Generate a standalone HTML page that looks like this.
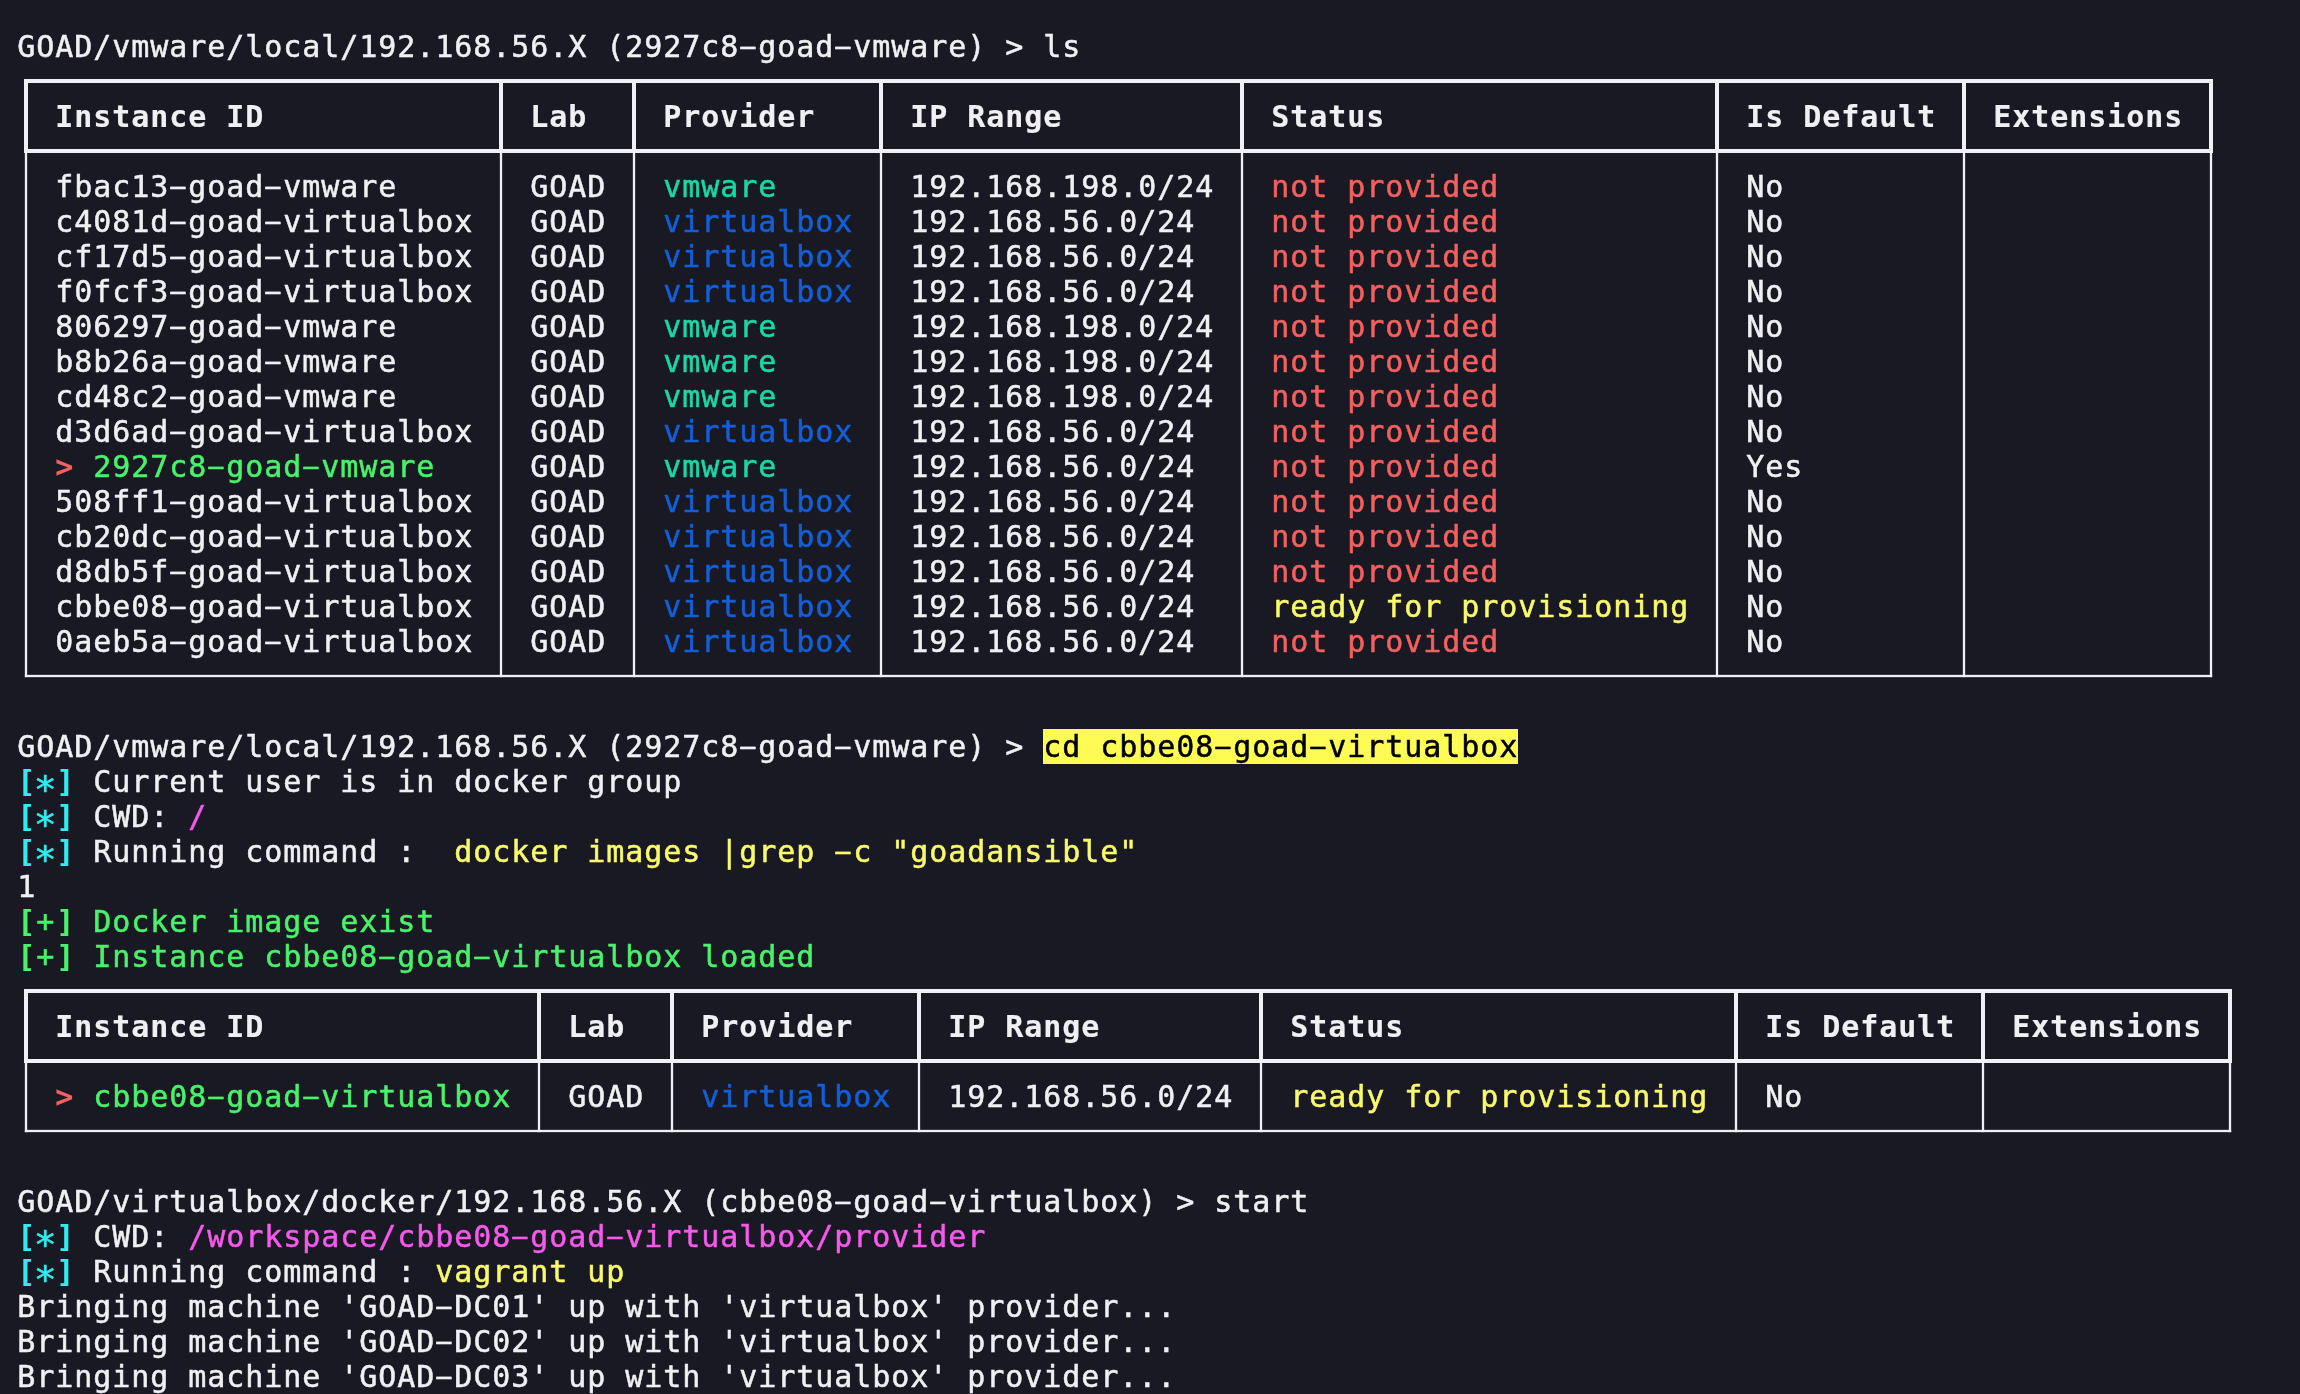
<!DOCTYPE html><html><head><meta charset="utf-8"><title>GOAD terminal</title><style>
html,body{margin:0;padding:0;background:#191923;}
#t{position:relative;width:2300px;height:1394px;overflow:hidden;will-change:transform;color:#f0f0f2;font-family:"DejaVu Sans Mono","Liberation Mono",monospace;font-size:30.0px;line-height:35.0px;letter-spacing:0.9385px;}
.l{position:absolute;left:0;height:35.0px;white-space:pre;}
.s{position:absolute;top:0px;height:35.0px;white-space:pre;}
.s{-webkit-text-stroke:0.5px currentColor}
.b{font-weight:bold;-webkit-text-stroke:0.15px currentColor}
#tx{position:absolute;left:0;top:0;width:2300px;height:1394px}
.rb{margin-left:1px}
.ast{font-size:38px;margin-top:9px;margin-left:-2.4px}
i{font-style:normal;display:inline-block;transform:translateY(-1.9px) scale(1.9,0.9);transform-origin:9.03px 22.5px}
.c-w{color:#f0f0f2}
.c-teal{color:#1cd7a5}
.c-blue{color:#145fd7}
.c-red{color:#f4605f}
.c-yel{color:#f9f96c}
.c-cyan{color:#32ebf0}
.c-grn{color:#48f26a}
.c-mag{color:#f55aeb}
.c-blk{color:#000000}
.h,.v,.H,.V{position:absolute;background:#f2f2f6}
</style></head><body><div id="t">
<div style="position:absolute;left:1043.00px;top:729.00px;width:475.00px;height:35.00px;background:#fffb55"></div>
<div id="tx">
<div class="l" style="top:29.00px"><span class="s c-w" style="left:17.20px;">GOAD/vmware/local/192.168.56.X (2927c8<i>-</i>goad<i>-</i>vmware) &gt; ls</span></div>
<div class="l" style="top:99.00px"><span class="s c-w b" style="left:55.20px;">Instance ID</span><span class="s c-w b" style="left:530.20px;">Lab</span><span class="s c-w b" style="left:663.20px;">Provider</span><span class="s c-w b" style="left:910.20px;">IP Range</span><span class="s c-w b" style="left:1271.20px;">Status</span><span class="s c-w b" style="left:1746.20px;">Is Default</span><span class="s c-w b" style="left:1993.20px;">Extensions</span></div>
<div class="l" style="top:169.00px"><span class="s c-w" style="left:55.20px;">fbac13<i>-</i>goad<i>-</i>vmware</span><span class="s c-w" style="left:530.20px;">GOAD</span><span class="s c-teal" style="left:663.20px;">vmware</span><span class="s c-w" style="left:910.20px;">192.168.198.0/24</span><span class="s c-red" style="left:1271.20px;">not provided</span><span class="s c-w" style="left:1746.20px;">No</span></div>
<div class="l" style="top:204.00px"><span class="s c-w" style="left:55.20px;">c4081d<i>-</i>goad<i>-</i>virtualbox</span><span class="s c-w" style="left:530.20px;">GOAD</span><span class="s c-blue" style="left:663.20px;">virtualbox</span><span class="s c-w" style="left:910.20px;">192.168.56.0/24</span><span class="s c-red" style="left:1271.20px;">not provided</span><span class="s c-w" style="left:1746.20px;">No</span></div>
<div class="l" style="top:239.00px"><span class="s c-w" style="left:55.20px;">cf17d5<i>-</i>goad<i>-</i>virtualbox</span><span class="s c-w" style="left:530.20px;">GOAD</span><span class="s c-blue" style="left:663.20px;">virtualbox</span><span class="s c-w" style="left:910.20px;">192.168.56.0/24</span><span class="s c-red" style="left:1271.20px;">not provided</span><span class="s c-w" style="left:1746.20px;">No</span></div>
<div class="l" style="top:274.00px"><span class="s c-w" style="left:55.20px;">f0fcf3<i>-</i>goad<i>-</i>virtualbox</span><span class="s c-w" style="left:530.20px;">GOAD</span><span class="s c-blue" style="left:663.20px;">virtualbox</span><span class="s c-w" style="left:910.20px;">192.168.56.0/24</span><span class="s c-red" style="left:1271.20px;">not provided</span><span class="s c-w" style="left:1746.20px;">No</span></div>
<div class="l" style="top:309.00px"><span class="s c-w" style="left:55.20px;">806297<i>-</i>goad<i>-</i>vmware</span><span class="s c-w" style="left:530.20px;">GOAD</span><span class="s c-teal" style="left:663.20px;">vmware</span><span class="s c-w" style="left:910.20px;">192.168.198.0/24</span><span class="s c-red" style="left:1271.20px;">not provided</span><span class="s c-w" style="left:1746.20px;">No</span></div>
<div class="l" style="top:344.00px"><span class="s c-w" style="left:55.20px;">b8b26a<i>-</i>goad<i>-</i>vmware</span><span class="s c-w" style="left:530.20px;">GOAD</span><span class="s c-teal" style="left:663.20px;">vmware</span><span class="s c-w" style="left:910.20px;">192.168.198.0/24</span><span class="s c-red" style="left:1271.20px;">not provided</span><span class="s c-w" style="left:1746.20px;">No</span></div>
<div class="l" style="top:379.00px"><span class="s c-w" style="left:55.20px;">cd48c2<i>-</i>goad<i>-</i>vmware</span><span class="s c-w" style="left:530.20px;">GOAD</span><span class="s c-teal" style="left:663.20px;">vmware</span><span class="s c-w" style="left:910.20px;">192.168.198.0/24</span><span class="s c-red" style="left:1271.20px;">not provided</span><span class="s c-w" style="left:1746.20px;">No</span></div>
<div class="l" style="top:414.00px"><span class="s c-w" style="left:55.20px;">d3d6ad<i>-</i>goad<i>-</i>virtualbox</span><span class="s c-w" style="left:530.20px;">GOAD</span><span class="s c-blue" style="left:663.20px;">virtualbox</span><span class="s c-w" style="left:910.20px;">192.168.56.0/24</span><span class="s c-red" style="left:1271.20px;">not provided</span><span class="s c-w" style="left:1746.20px;">No</span></div>
<div class="l" style="top:449.00px"><span class="s c-red b" style="left:55.20px;">&gt; </span><span class="s c-grn" style="left:93.20px;">2927c8<i>-</i>goad<i>-</i>vmware</span><span class="s c-w" style="left:530.20px;">GOAD</span><span class="s c-teal" style="left:663.20px;">vmware</span><span class="s c-w" style="left:910.20px;">192.168.56.0/24</span><span class="s c-red" style="left:1271.20px;">not provided</span><span class="s c-w" style="left:1746.20px;">Yes</span></div>
<div class="l" style="top:484.00px"><span class="s c-w" style="left:55.20px;">508ff1<i>-</i>goad<i>-</i>virtualbox</span><span class="s c-w" style="left:530.20px;">GOAD</span><span class="s c-blue" style="left:663.20px;">virtualbox</span><span class="s c-w" style="left:910.20px;">192.168.56.0/24</span><span class="s c-red" style="left:1271.20px;">not provided</span><span class="s c-w" style="left:1746.20px;">No</span></div>
<div class="l" style="top:519.00px"><span class="s c-w" style="left:55.20px;">cb20dc<i>-</i>goad<i>-</i>virtualbox</span><span class="s c-w" style="left:530.20px;">GOAD</span><span class="s c-blue" style="left:663.20px;">virtualbox</span><span class="s c-w" style="left:910.20px;">192.168.56.0/24</span><span class="s c-red" style="left:1271.20px;">not provided</span><span class="s c-w" style="left:1746.20px;">No</span></div>
<div class="l" style="top:554.00px"><span class="s c-w" style="left:55.20px;">d8db5f<i>-</i>goad<i>-</i>virtualbox</span><span class="s c-w" style="left:530.20px;">GOAD</span><span class="s c-blue" style="left:663.20px;">virtualbox</span><span class="s c-w" style="left:910.20px;">192.168.56.0/24</span><span class="s c-red" style="left:1271.20px;">not provided</span><span class="s c-w" style="left:1746.20px;">No</span></div>
<div class="l" style="top:589.00px"><span class="s c-w" style="left:55.20px;">cbbe08<i>-</i>goad<i>-</i>virtualbox</span><span class="s c-w" style="left:530.20px;">GOAD</span><span class="s c-blue" style="left:663.20px;">virtualbox</span><span class="s c-w" style="left:910.20px;">192.168.56.0/24</span><span class="s c-yel" style="left:1271.20px;">ready for provisioning</span><span class="s c-w" style="left:1746.20px;">No</span></div>
<div class="l" style="top:624.00px"><span class="s c-w" style="left:55.20px;">0aeb5a<i>-</i>goad<i>-</i>virtualbox</span><span class="s c-w" style="left:530.20px;">GOAD</span><span class="s c-blue" style="left:663.20px;">virtualbox</span><span class="s c-w" style="left:910.20px;">192.168.56.0/24</span><span class="s c-red" style="left:1271.20px;">not provided</span><span class="s c-w" style="left:1746.20px;">No</span></div>
<div class="l" style="top:729.00px"><span class="s c-w" style="left:17.20px;">GOAD/vmware/local/192.168.56.X (2927c8<i>-</i>goad<i>-</i>vmware) &gt; </span><span class="s c-blk" style="left:1043.20px;">cd cbbe08<i>-</i>goad<i>-</i>virtualbox</span></div>
<div class="l" style="top:764.00px"><span class="s c-cyan b" style="left:17.20px;">[</span><span class="s c-cyan ast" style="left:36.20px;">*</span><span class="s c-cyan b rb" style="left:55.20px;">]</span><span class="s c-w" style="left:74.20px;"> Current user is in docker group</span></div>
<div class="l" style="top:799.00px"><span class="s c-cyan b" style="left:17.20px;">[</span><span class="s c-cyan ast" style="left:36.20px;">*</span><span class="s c-cyan b rb" style="left:55.20px;">]</span><span class="s c-w" style="left:74.20px;"> CWD: </span><span class="s c-mag" style="left:188.20px;">/</span></div>
<div class="l" style="top:834.00px"><span class="s c-cyan b" style="left:17.20px;">[</span><span class="s c-cyan ast" style="left:36.20px;">*</span><span class="s c-cyan b rb" style="left:55.20px;">]</span><span class="s c-w" style="left:74.20px;"> Running command :  </span><span class="s c-yel" style="left:454.20px;">docker images |grep <i>-</i>c "goadansible"</span></div>
<div class="l" style="top:869.00px"><span class="s c-w" style="left:17.20px;">1</span></div>
<div class="l" style="top:904.00px"><span class="s c-grn b" style="left:17.20px;">[</span><span class="s c-grn" style="left:36.20px;">+</span><span class="s c-grn b rb" style="left:55.20px;">]</span><span class="s c-grn" style="left:74.20px;"> Docker image exist</span></div>
<div class="l" style="top:939.00px"><span class="s c-grn b" style="left:17.20px;">[</span><span class="s c-grn" style="left:36.20px;">+</span><span class="s c-grn b rb" style="left:55.20px;">]</span><span class="s c-grn" style="left:74.20px;"> Instance cbbe08<i>-</i>goad<i>-</i>virtualbox loaded</span></div>
<div class="l" style="top:1009.00px"><span class="s c-w b" style="left:55.20px;">Instance ID</span><span class="s c-w b" style="left:568.20px;">Lab</span><span class="s c-w b" style="left:701.20px;">Provider</span><span class="s c-w b" style="left:948.20px;">IP Range</span><span class="s c-w b" style="left:1290.20px;">Status</span><span class="s c-w b" style="left:1765.20px;">Is Default</span><span class="s c-w b" style="left:2012.20px;">Extensions</span></div>
<div class="l" style="top:1079.00px"><span class="s c-red b" style="left:55.20px;">&gt; </span><span class="s c-grn" style="left:93.20px;">cbbe08<i>-</i>goad<i>-</i>virtualbox</span><span class="s c-w" style="left:568.20px;">GOAD</span><span class="s c-blue" style="left:701.20px;">virtualbox</span><span class="s c-w" style="left:948.20px;">192.168.56.0/24</span><span class="s c-yel" style="left:1290.20px;">ready for provisioning</span><span class="s c-w" style="left:1765.20px;">No</span></div>
<div class="l" style="top:1184.00px"><span class="s c-w" style="left:17.20px;">GOAD/virtualbox/docker/192.168.56.X (cbbe08<i>-</i>goad<i>-</i>virtualbox) &gt; start</span></div>
<div class="l" style="top:1219.00px"><span class="s c-cyan b" style="left:17.20px;">[</span><span class="s c-cyan ast" style="left:36.20px;">*</span><span class="s c-cyan b rb" style="left:55.20px;">]</span><span class="s c-w" style="left:74.20px;"> CWD: </span><span class="s c-mag" style="left:188.20px;">/workspace/cbbe08<i>-</i>goad<i>-</i>virtualbox/provider</span></div>
<div class="l" style="top:1254.00px"><span class="s c-cyan b" style="left:17.20px;">[</span><span class="s c-cyan ast" style="left:36.20px;">*</span><span class="s c-cyan b rb" style="left:55.20px;">]</span><span class="s c-w" style="left:74.20px;"> Running command : </span><span class="s c-yel" style="left:435.20px;">vagrant up</span></div>
<div class="l" style="top:1289.00px"><span class="s c-w" style="left:17.20px;">Bringing machine 'GOAD<i>-</i>DC01' up with 'virtualbox' provider...</span></div>
<div class="l" style="top:1324.00px"><span class="s c-w" style="left:17.20px;">Bringing machine 'GOAD<i>-</i>DC02' up with 'virtualbox' provider...</span></div>
<div class="l" style="top:1359.00px"><span class="s c-w" style="left:17.20px;">Bringing machine 'GOAD<i>-</i>DC03' up with 'virtualbox' provider...</span></div>
</div>
<svg width="2300" height="1394" viewBox="0 0 2300 1394" style="position:absolute;left:0;top:0" fill="#f0f0f6" shape-rendering="geometricPrecision">
<rect x="24.00" y="79.00" width="2189.00" height="4.00"/>
<rect x="24.00" y="149.00" width="2189.00" height="4.00"/>
<rect x="24.00" y="79.00" width="4.00" height="74.00"/>
<rect x="24.85" y="151.00" width="2.30" height="526.15"/>
<rect x="499.00" y="79.00" width="4.00" height="74.00"/>
<rect x="499.85" y="151.00" width="2.30" height="526.15"/>
<rect x="632.00" y="79.00" width="4.00" height="74.00"/>
<rect x="632.85" y="151.00" width="2.30" height="526.15"/>
<rect x="879.00" y="79.00" width="4.00" height="74.00"/>
<rect x="879.85" y="151.00" width="2.30" height="526.15"/>
<rect x="1240.00" y="79.00" width="4.00" height="74.00"/>
<rect x="1240.85" y="151.00" width="2.30" height="526.15"/>
<rect x="1715.00" y="79.00" width="4.00" height="74.00"/>
<rect x="1715.85" y="151.00" width="2.30" height="526.15"/>
<rect x="1962.00" y="79.00" width="4.00" height="74.00"/>
<rect x="1962.85" y="151.00" width="2.30" height="526.15"/>
<rect x="2209.00" y="79.00" width="4.00" height="74.00"/>
<rect x="2209.85" y="151.00" width="2.30" height="526.15"/>
<rect x="24.85" y="674.85" width="2187.30" height="2.30"/>
<rect x="24.00" y="989.00" width="2208.00" height="4.00"/>
<rect x="24.00" y="1059.00" width="2208.00" height="4.00"/>
<rect x="24.00" y="989.00" width="4.00" height="74.00"/>
<rect x="24.85" y="1061.00" width="2.30" height="71.15"/>
<rect x="537.00" y="989.00" width="4.00" height="74.00"/>
<rect x="537.85" y="1061.00" width="2.30" height="71.15"/>
<rect x="670.00" y="989.00" width="4.00" height="74.00"/>
<rect x="670.85" y="1061.00" width="2.30" height="71.15"/>
<rect x="917.00" y="989.00" width="4.00" height="74.00"/>
<rect x="917.85" y="1061.00" width="2.30" height="71.15"/>
<rect x="1259.00" y="989.00" width="4.00" height="74.00"/>
<rect x="1259.85" y="1061.00" width="2.30" height="71.15"/>
<rect x="1734.00" y="989.00" width="4.00" height="74.00"/>
<rect x="1734.85" y="1061.00" width="2.30" height="71.15"/>
<rect x="1981.00" y="989.00" width="4.00" height="74.00"/>
<rect x="1981.85" y="1061.00" width="2.30" height="71.15"/>
<rect x="2228.00" y="989.00" width="4.00" height="74.00"/>
<rect x="2228.85" y="1061.00" width="2.30" height="71.15"/>
<rect x="24.85" y="1129.85" width="2206.30" height="2.30"/>
</svg>
</div></body></html>
